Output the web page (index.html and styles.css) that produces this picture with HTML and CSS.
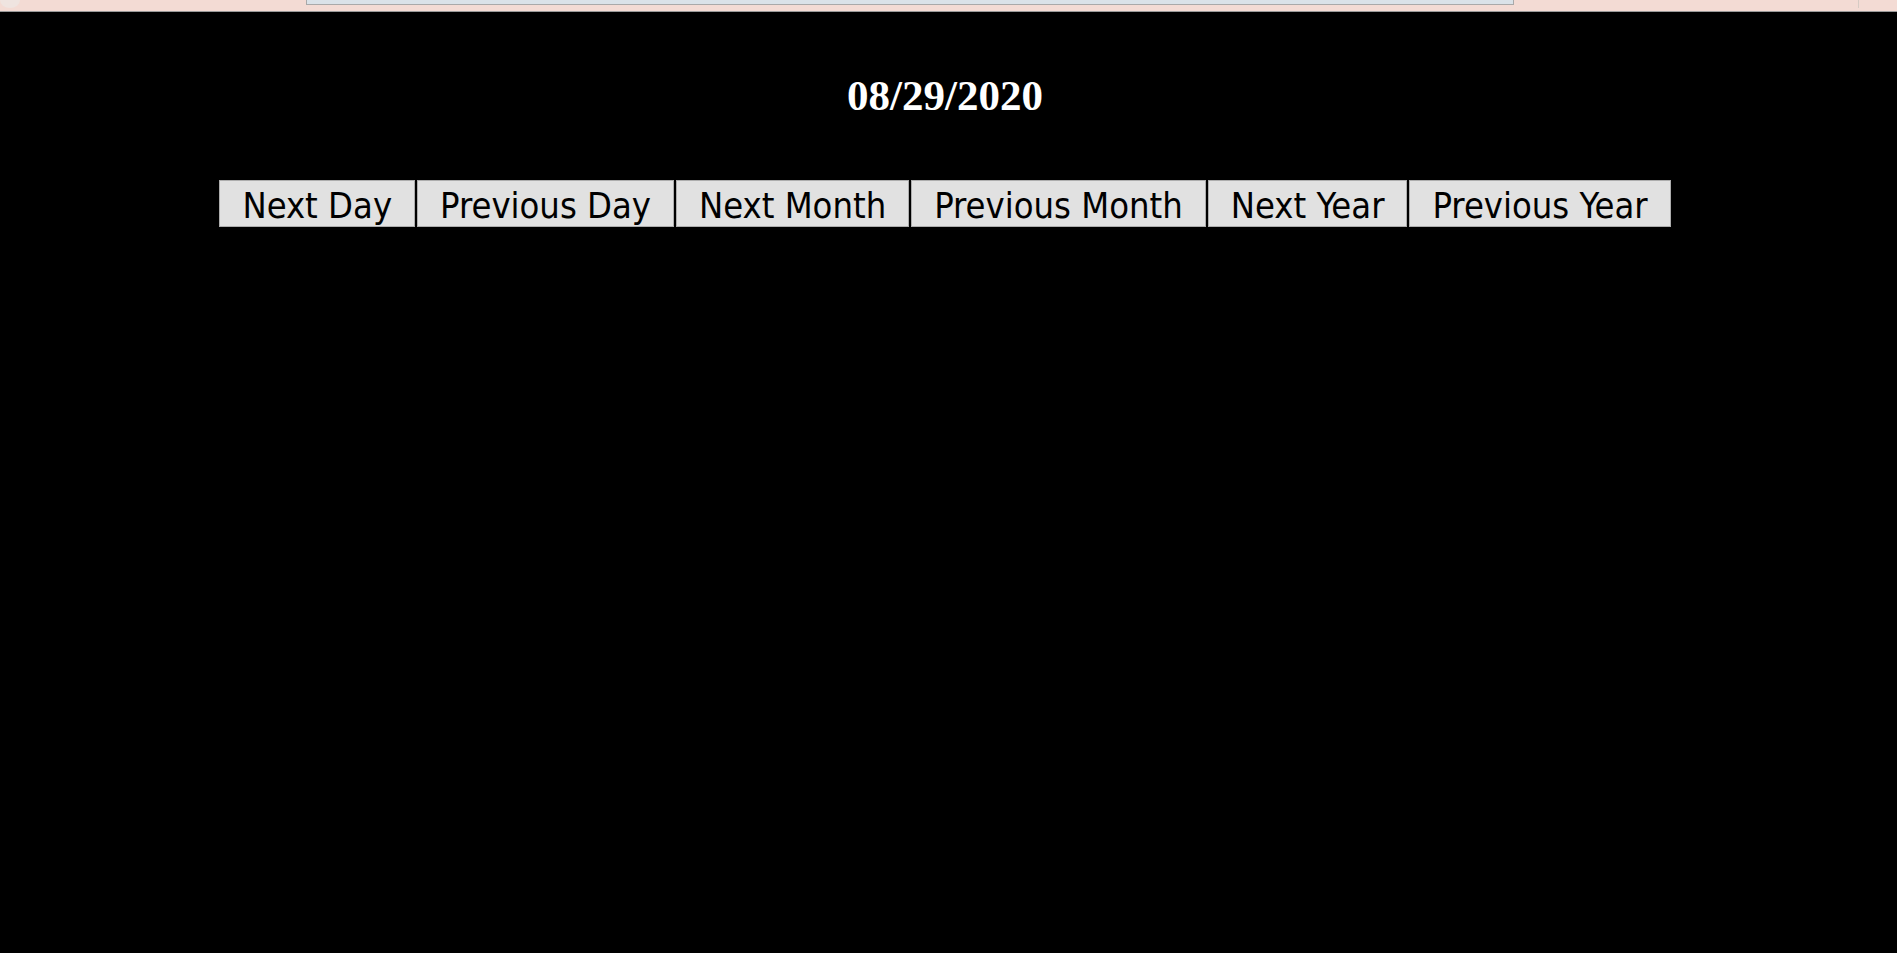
FILE: index.html
```html
<!DOCTYPE html>
<html lang="en">
<head>
<meta charset="utf-8">
<title>Date</title>
<link rel="stylesheet" href="styles.css">
</head>
<body>
<div class="topstrip">
  <div class="strip-icon"></div>
  <div class="strip-field"></div>
  <div class="strip-sep"></div>
</div>
<main class="page">
  <h1 class="date">08/29/2020</h1>
  <div class="buttons">
    <button class="btn">Next Day</button>
    <button class="btn">Previous Day</button>
    <button class="btn">Next Month</button>
    <button class="btn">Previous Month</button>
    <button class="btn">Next Year</button>
    <button class="btn">Previous Year</button>
  </div>
</main>
</body>
</html>
```
FILE: styles.css
```css
html, body {
  margin: 0;
  padding: 0;
  height: 100%;
  background: #000;
}
body {
  display: flex;
  flex-direction: column;
}
.topstrip {
  height: 11px;
  background: #f3dbd4;
  border-bottom: 1px solid #9a9a9a;
  position: relative;
  flex: none;
}
.strip-icon {
  position: absolute;
  left: 0;
  top: -8px;
  width: 20px;
  height: 16px;
  border-radius: 50%;
  background: #efe4e0;
}
.strip-field {
  position: absolute;
  left: 306px;
  top: 0;
  width: 1206px;
  height: 4px;
  background: #dae2e8;
  border: 1px solid #a9a9a9;
  border-top: none;
}
.strip-sep {
  position: absolute;
  left: 1858px;
  top: 0;
  width: 1px;
  height: 8px;
  background: #d6cbc4;
}
.page {
  flex: 1;
  background: #000;
  padding: 0 7px 0 0;
  text-align: center;
}
.date {
  margin: 59px 0 0;
  font-family: "Liberation Serif", "Times New Roman", serif;
  font-weight: bold;
  font-size: 43px;
  color: #fff;
}
.buttons {
  margin-top: 60px;
  display: flex;
  justify-content: center;
  gap: 2px;
}
.btn {
  font-family: "DejaVu Sans Condensed", "DejaVu Sans", sans-serif;
  font-stretch: condensed;
  font-size: 36px;
  color: #000;
  background: #e1e1e1;
  border: 1px solid #adadad;
  border-radius: 0;
  height: 47px;
  padding: 4px 22px 0;
  margin: 0;
  line-height: 1;
}
```
